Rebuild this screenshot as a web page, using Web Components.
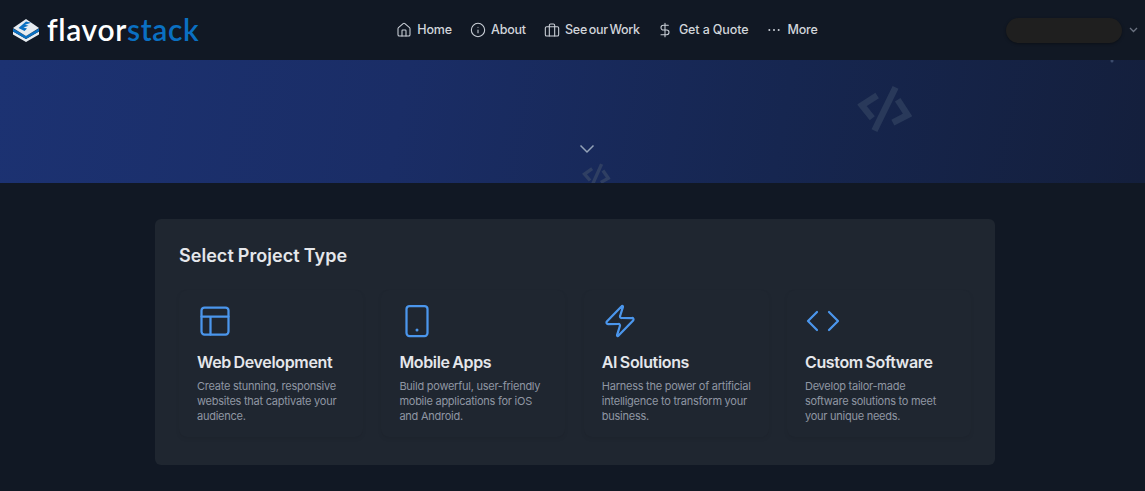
<!DOCTYPE html>
<html lang="en"><head><meta charset="utf-8"><title>Flavorstack</title>
<style>
html,body{margin:0;padding:0;background:#111824;font-family:"Inter","Liberation Sans",sans-serif;}
body{width:1145px;height:491px;overflow:hidden}
</style></head><body>
<template id="t-header"><style>
:host{display:flex;align-items:center;height:60px;background:#111824;box-sizing:border-box;position:relative;padding:0 7px 0 12px}
.logo{display:flex;align-items:center;gap:7px;width:383.800px;flex:none;}
.word{font:600 30px/1 "Lato","Liberation Sans",sans-serif;color:#fff;letter-spacing:.65px;margin-top:-3px}
.word b{font-weight:600;color:#0a70c2}
nav{display:flex;align-items:center;flex:none}
.acct{margin-left:auto;display:flex;align-items:center;gap:7px}
.pill{width:116px;height:25px;border-radius:13px;background:#1f1f1f;box-shadow:0 1px 3px rgba(0,0,0,.35)}
svg{display:block}
</style><div class="logo">
<svg width="28" height="24" viewBox="0 0 28 24"><path d="M1 13.500l13 7.500 13-7.500v3L14 24 1 16.500z" fill="#e8edf2"/><path d="M1 10.500l13 7.500 13-7.500v3L14 21 1 13.500z" fill="#0a70c2"/><path d="M14 1l13 9-13 8L1 10z" fill="#e6ebf0"/><path d="M14 3.500l5 1.200-6 2 3.500 1-5 1.800 3.500 1-2.500 2.500L6.500 10z" fill="#0a70c2"/></svg>
<span class="word">flavor<b>stack</b></span></div>
<nav><slot></slot></nav>
<div class="acct"><div class="pill"></div>
<svg width="9" height="6" viewBox="0 0 9 6" fill="none" stroke="#6b7280" stroke-width="1.300"><path d="M1 1l3.500 3.500L8 1"/></svg></div>
</template>
<template id="t-nav"><style>
:host{display:flex;align-items:center;gap:5.500px;font:500 12.500px/1 "Inter",sans-serif;color:#d1d5db;letter-spacing:var(--ls,-.2px);word-spacing:var(--ws,0);margin-right:var(--mr,17.700px);white-space:nowrap}
::slotted(svg){display:block;width:16px;height:16px;fill:none;stroke:#cbd0d8;stroke-width:1.600;stroke-linecap:round;stroke-linejoin:round}
</style><slot name="icon"></slot><slot></slot></template>
<template id="t-hero"><style>
:host{display:block;height:123px;position:relative;overflow:hidden;background:linear-gradient(100deg,#1c3272 0%,#1a2d66 35%,#162650 68%,#141f3c 100%)}
svg{position:absolute;display:block;fill:none}
.big{left:857px;top:21px;width:56px;height:56px;transform:rotate(12deg);stroke:#29395a;stroke-width:2.800}
.small{left:582px;top:101px;width:29px;height:29px;transform:rotate(10deg);stroke:#2f3f63;stroke-width:2.800}
.chev{left:579px;top:84px;width:16px;height:10px;stroke:#94a3b8;stroke-width:1.500}
.dot{left:1110px;top:0;width:4px;height:3px}
</style>
<svg class="big" viewBox="0 0 24 24"><path d="M7.500 7L2 12.500 7.500 17M16.500 7l5.500 5.500L16.500 17M14.500 2l-5 20"/></svg>
<svg class="small" viewBox="0 0 24 24"><path d="M7.500 7L2 12.500 7.500 17M16.500 7l5.500 5.500L16.500 17M14.500 2l-5 20"/></svg>
<svg class="chev" viewBox="0 0 16 10"><path d="M1.500 1.500L8 8l6.500-6.500"/></svg>
<svg class="dot" viewBox="0 0 4 3"><circle cx="2" cy="1" r="1.500" fill="#3b4a6b"/></svg>
</template>
<template id="t-panel"><style>
:host{display:block;width:840px;height:246px;box-sizing:border-box;margin:36px 0 0 155px;background:#1f2630;border-radius:6px;padding:25px 24px 0}
h2{margin:0 0 22px;font:600 18px/24px "Inter",sans-serif;color:#e5e7eb;letter-spacing:.04px;word-spacing:-.5px}
.grid{display:grid;grid-template-columns:repeat(4,1fr);gap:18.400px}
</style><h2>Select Project Type</h2><div class="grid"><slot></slot></div></template>
<template id="t-card"><style>
:host{display:block;height:147px;box-sizing:border-box;padding:13px 18px 0;background:#1f2630;border-radius:8px;box-shadow:0 2px 4px rgba(0,0,0,.06)}
.i{height:36px;display:flex;align-items:center;margin-bottom:13px}
::slotted(svg){display:block;fill:none;stroke:#4b96ec;stroke-width:1.500;stroke-linecap:round;stroke-linejoin:round}
h3{margin:0 0 7px;font:600 16px/20px "Inter",sans-serif;color:#e5e7eb;letter-spacing:-.35px;word-spacing:-1px}
p{margin:0;font:400 11px/15px "Inter",sans-serif;color:#8f96a3;white-space:pre;letter-spacing:-.25px}
</style><div class="i"><slot name="icon"></slot></div><h3><slot name="title"></slot></h3><p><slot></slot></p></template>
<fs-header>
<fs-nav><svg slot="icon" viewBox="0 0 24 24"><path d="M15 21v-8a1 1 0 0 0-1-1h-4a1 1 0 0 0-1 1v8"/><path d="M3 10a2 2 0 0 1 .709-1.528l7-5.999a2 2 0 0 1 2.582 0l7 5.999A2 2 0 0 1 21 10v9a2 2 0 0 1-2 2H5a2 2 0 0 1-2-2z"/></svg>Home</fs-nav>
<fs-nav><svg slot="icon" viewBox="0 0 24 24"><circle cx="12" cy="12" r="10"/><path d="M12 16v-4M12 8h.01"/></svg>About</fs-nav>
<fs-nav style="--ws:-1.200px;--ls:-.32px"><svg slot="icon" viewBox="0 0 24 24"><rect x="2" y="7" width="20" height="14" rx="2"/><path d="M16 21V5a2 2 0 0 0-2-2h-4a2 2 0 0 0-2 2v16"/></svg>See our Work</fs-nav>
<fs-nav style="--ls:-.12px"><svg slot="icon" viewBox="0 0 24 24"><path d="M12 2v20M17 5H9.500a3.500 3.500 0 0 0 0 7h5a3.500 3.500 0 0 1 0 7H6"/></svg>Get a Quote</fs-nav>
<fs-nav style="--mr:0;--ls:-.25px"><svg slot="icon" viewBox="0 0 24 24"><path d="M5 12h.01M12 12h.01M19 12h.01" stroke-width="3"/></svg>More</fs-nav>
</fs-header>
<fs-hero></fs-hero>
<fs-panel>
<fs-card><svg slot="icon" width="36" height="36" viewBox="0 0 24 24"><rect x="3" y="3" width="18" height="18" rx="2"/><path d="M3 9h18M9 21V9"/></svg><span slot="title">Web Development</span>Create stunning, responsive
websites that captivate your
audience.</fs-card>
<fs-card><svg slot="icon" width="36" height="36" viewBox="0 0 24 24"><rect x="5" y="2" width="14" height="20" rx="2"/><path d="M12 18h.01" stroke-width="2"/></svg><span slot="title">Mobile Apps</span>Build powerful, user-friendly
mobile applications for iOS
and Android.</fs-card>
<fs-card><svg slot="icon" width="36" height="36" viewBox="0 0 24 24"><path d="M4 14a1 1 0 0 1-.78-1.630l9.900-10.200a.5.500 0 0 1 .86.460l-1.920 6.020A1 1 0 0 0 13 10h7a1 1 0 0 1 .78 1.630l-9.900 10.200a.5.500 0 0 1-.86-.460l1.920-6.020A1 1 0 0 0 11 14z"/></svg><span slot="title">AI Solutions</span>Harness the power of artificial
intelligence to transform your
business.</fs-card>
<fs-card><svg slot="icon" width="36" height="36" viewBox="0 0 24 24"><path d="M16 18l6-6-6-6M8 6l-6 6 6 6"/></svg><span slot="title">Custom Software</span>Develop tailor-made
software solutions to meet
your unique needs.</fs-card>
</fs-panel>
<script>
for(const [n,t] of [['fs-header','t-header'],['fs-nav','t-nav'],['fs-hero','t-hero'],['fs-panel','t-panel'],['fs-card','t-card']]){
customElements.define(n,class extends HTMLElement{constructor(){super();this.attachShadow({mode:'open'}).appendChild(document.getElementById(t).content.cloneNode(true));}});
}
</script>
</body></html>
